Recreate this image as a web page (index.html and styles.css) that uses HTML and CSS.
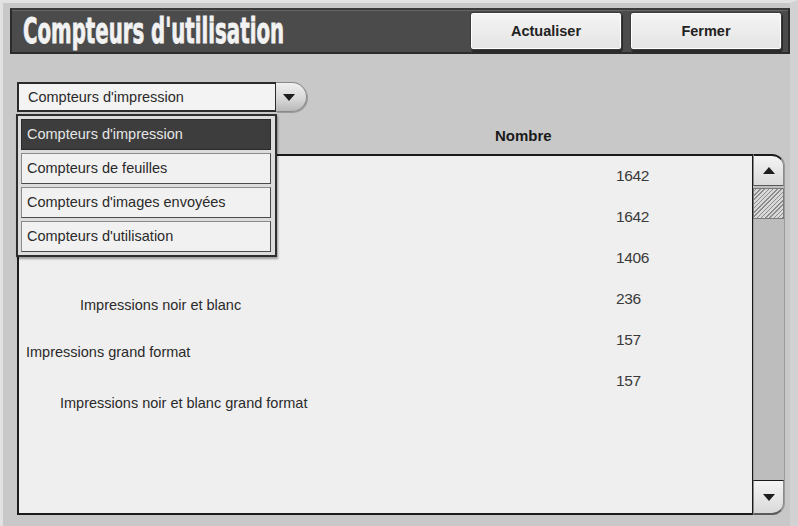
FILE: index.html
```html
<!DOCTYPE html>
<html lang="fr">
<head>
    <meta charset="UTF-8">
    <meta name="viewport" content="width=device-width, initial-scale=1.0">
    <title>Compteurs d'utilisation</title>
    <link rel="stylesheet" href="styles.css">
</head>
<body>

<div class="screen">
    <header class="titlebar">
        <h1 class="title"><span>Compteurs d'utilisation</span></h1>
        <div class="actions">
            <button type="button" class="btn">Actualiser</button>
            <button type="button" class="btn">Fermer</button>
        </div>
    </header>

    <main class="content">
        <div class="picker">
            <div class="select">Compteurs d'impression</div>
            <div class="select-arrow"><span class="tri-down"></span></div>

            <ul class="menu">
                <li class="menu-item selected">Compteurs d'impression</li>
                <li class="menu-item">Compteurs de feuilles</li>
                <li class="menu-item">Compteurs d'images envoyées</li>
                <li class="menu-item">Compteurs d'utilisation</li>
            </ul>
        </div>

        <div class="col-head">Nombre</div>

        <div class="table">
            <div class="rows">
                <div class="row"><span class="label"></span><span class="num">1642</span></div>
                <div class="row"><span class="label"></span><span class="num">1642</span></div>
                <div class="row"><span class="label"></span><span class="num">1406</span></div>
                <div class="row"><span class="label level-2 drop-1">Impressions noir et blanc</span><span class="num">236</span></div>
                <div class="row"><span class="label drop-2">Impressions grand format</span><span class="num">157</span></div>
                <div class="row"><span class="label level-1 drop-3">Impressions noir et blanc grand format</span><span class="num">157</span></div>
            </div>
            <div class="scrollbar">
                <div class="scroll-btn up"><span class="tri-up"></span></div>
                <div class="thumb"></div>
                <div class="track"></div>
                <div class="scroll-btn down"><span class="tri-down"></span></div>
            </div>
        </div>
    </main>
</div>

</body>
</html>
```

FILE: styles.css
```css
body {
    margin: 0;
    background-color: #DADADA;
    font-family: "Liberation Sans", Arial, sans-serif;
    color: #2A2A2A;
}
.screen {
    width: 798px;
    height: 526px;
    box-sizing: border-box;
    background-color: #C8C8C8;
    border-top: 3px solid #E2E2E2;
    border-left: 3px solid #E2E2E2;
    border-right: 8px solid #D2D2D2;
    overflow: hidden;
}

/* barre de titre */
.titlebar {
    display: flex;
    align-items: center;
    justify-content: space-between;
    height: 46px;
    margin: 5px 0 0 7px;
    box-sizing: border-box;
    background-color: #4B4B4B;
    border: 2px solid #2C2C2C;
    border-top-color: #3A3A3A;
    box-shadow: inset 0 1px 0 #666;
}
.title {
    margin: 0 0 0 11px;
    font-family: "DejaVu Sans Condensed", "DejaVu Sans", sans-serif;
    font-weight: bold;
    font-size: 36px;
    line-height: 40px;
    color: #F2F2F2;
    white-space: nowrap;
    width: 270px;
}
.title span {
    display: inline-block;
    transform: scaleX(0.61);
    transform-origin: left center;
    -webkit-text-stroke: 0.8px #F2F2F2;
}
.actions {
    display: flex;
    gap: 8px;
    margin-right: 6px;
}
.btn {
    width: 152px;
    height: 38px;
    background: linear-gradient(#F4F4F4, #E4E4E4);
    border: 1px solid #3A3A3A;
    border-radius: 3px;
    box-shadow: 1px 2px 0 #2A2A2A, inset 0 0 0 1px #FFFFFF;
    font-family: "Liberation Sans", Arial, sans-serif;
    font-size: 14.5px;
    font-weight: bold;
    color: #222;
}

/* contenu */
.content {
    padding: 28px 5px 0 14px;
}
.picker {
    position: relative;
    display: flex;
    height: 30px;
}
.select {
    width: 259px;
    height: 30px;
    box-sizing: border-box;
    padding-left: 9px;
    line-height: 26px;
    font-size: 14.5px;
    background-color: #F3F3F3;
    border: 2px solid #2A2A2A;
    border-right-width: 1px;
}
.select-arrow {
    width: 31px;
    height: 30px;
    box-sizing: border-box;
    display: flex;
    align-items: center;
    justify-content: center;
    padding-right: 4px;
    background: linear-gradient(#F0F0F0, #D6D6D6 60%, #B8B8B8);
    border: 1px solid #8A8A8A;
    border-left: none;
    border-radius: 0 15px 15px 0;
    box-shadow: 1px 1px 0 #9A9A9A;
}
.tri-down {
    width: 0;
    height: 0;
    border-left: 6px solid transparent;
    border-right: 6px solid transparent;
    border-top: 7px solid #1E1E1E;
}
.tri-up {
    width: 0;
    height: 0;
    border-left: 6px solid transparent;
    border-right: 6px solid transparent;
    border-bottom: 7px solid #1E1E1E;
}

/* liste deroulante */
.menu {
    position: absolute;
    top: 32px;
    left: -1px;
    z-index: 2;
    width: 261px;
    box-sizing: border-box;
    margin: 0;
    padding: 3px 4px 3px 3px;
    list-style: none;
    display: flex;
    flex-direction: column;
    gap: 3px;
    background-color: #DCDCDC;
    border: 2px solid #2E2E2E;
    box-shadow: 1px 2px 2px rgba(0,0,0,0.35);
}
.menu-item {
    height: 31px;
    box-sizing: border-box;
    padding-left: 5px;
    line-height: 29px;
    font-size: 14.5px;
    background-color: #F1F1F1;
    border: 1px solid #4A4A4A;
    border-top-color: #8A8A8A;
    border-left-color: #8A8A8A;
    white-space: nowrap;
}
.menu-item.selected {
    background-color: #3D3D3D;
    border-color: #2A2A2A;
    color: #E6E6E6;
}

/* tableau */
.col-head {
    height: 42px;
    box-sizing: border-box;
    padding: 15px 0 0 478px;
    line-height: 17px;
    font-size: 15px;
    font-weight: bold;
    color: #1A1A1A;
}
.table {
    display: flex;
    height: 361px;
}
.rows {
    flex: 1;
    background-color: #EFEFEF;
    border: 2px solid #1A1A1A;
    border-right: 1px solid #1A1A1A;
}
.row {
    display: grid;
    grid-template-columns: 597px 1fr;
    height: 41px;
    font-size: 14.5px;
    line-height: 17px;
}
.label {
    padding-left: 7px;
    white-space: nowrap;
}
.label.level-1 {
    padding-left: 41px;
}
.label.level-2 {
    padding-left: 61px;
}
.label.drop-1 {
    padding-top: 18px;
}
.label.drop-2 {
    padding-top: 24px;
}
.label.drop-3 {
    padding-top: 34px;
}
.num {
    padding-top: 11px;
    font-size: 15.5px;
    letter-spacing: -0.4px;
    color: #3A3A3A;
}

/* barre de defilement */
.scrollbar {
    width: 31px;
    display: flex;
    flex-direction: column;
    background-color: #BDBDBD;
    border-right: 1px solid #9A9A9A;
    border-radius: 0 12px 12px 0;
}
.scroll-btn {
    display: flex;
    align-items: center;
    justify-content: center;
    box-sizing: border-box;
    background: linear-gradient(#F4F4F4, #DADADA);
    border: 1px solid #8A8A8A;
}
.scroll-btn.up {
    height: 32px;
    border-radius: 0 12px 0 0;
    border-bottom-color: #5A5A5A;
    border-top: 2px solid #1A1A1A;
}
.scroll-btn.down {
    height: 35px;
    border-radius: 0 0 12px 0;
    border-top: 1px solid #1A1A1A;
    border-bottom: 2px solid #5A5A5A;
}
.thumb {
    height: 31px;
    box-sizing: border-box;
    margin-top: 2px;
    border: 1px solid #7A7A7A;
    background: repeating-linear-gradient(-45deg, #8C8C8C 0 1px, #D8D8D8 1px 3px);
}
.track {
    flex: 1;
    border-left: 1px solid #9C9C9C;
}
```
